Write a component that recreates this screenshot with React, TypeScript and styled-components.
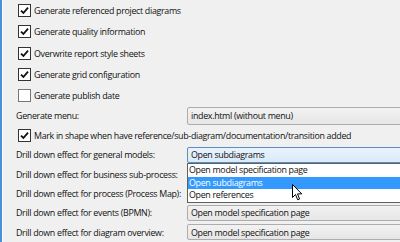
import React from 'react';
import styled, { createGlobalStyle } from 'styled-components';

const GlobalStyle = createGlobalStyle`
  html, body {
    margin: 0;
    padding: 0;
    background: #f0f0f0;
  }
  body {
    font-family: 'Open Sans', 'Noto Sans', sans-serif;
    font-size: 8.9px;
    letter-spacing: -0.32px;
    color: #111;
  }
`;

const checks = [
  { label: 'Generate referenced project diagrams', checked: true },
  { label: 'Generate quality information', checked: true },
  { label: 'Overwrite report style sheets', checked: true },
  { label: 'Generate grid configuration', checked: true },
  { label: 'Generate publish date', checked: false },
];

const drillRows = [
  { label: 'Drill down effect for general models:', value: 'Open subdiagrams', open: true },
  { label: 'Drill down effect for business sub-process:', value: '' },
  { label: 'Drill down effect for process (Process Map):', value: '' },
  { label: 'Drill down effect for events (BPMN):', value: 'Open model specification page' },
  { label: 'Drill down effect for diagram overview:', value: 'Open model specification page' },
];

const options = ['Open model specification page', 'Open subdiagrams', 'Open references'];

const Window = styled.div`
  width: 400px;
  height: 242px;
  overflow: hidden;
  display: flex;
  background: #f0f0f0;
  position: relative;
`;

const SideStrip = styled.div`
  width: 2px;
  flex: none;
  background: #4a8fda;
  border-right: 1px solid #fbfdff;
`;

const Content = styled.div`
  flex: none;
  width: 460px;
  padding-left: 13px;
  display: flex;
  flex-direction: column;
`;

const CheckRow = styled.label<{ $h: number }>`
  height: ${p => p.$h}px;
  display: flex;
  align-items: center;
  gap: 3px;
  padding-left: 2px;
  white-space: nowrap;
`;

const Box = styled.span<{ $checked: boolean }>`
  width: 11px;
  height: 11px;
  flex: none;
  border: 1px solid ${p => (p.$checked ? '#333' : '#777')};
  background: #fff;
  display: flex;
  align-items: center;
  justify-content: center;
`;

const FieldRow = styled.div<{ $h: number }>`
  height: ${p => p.$h}px;
  display: grid;
  grid-template-columns: 171px 240px;
  align-items: center;
  white-space: nowrap;
`;

const SelectWrap = styled.div`
  position: relative;
`;

const Select = styled.div<{ $h: number; $open?: boolean }>`
  height: ${p => p.$h - 2}px;
  border: 1px solid ${p => (p.$open ? '#5a8fc4' : '#adadad')};
  border-radius: 2px;
  background: ${p =>
    p.$open
      ? 'linear-gradient(#eaf3fc, #d9eafb)'
      : 'linear-gradient(#f2f2f2, #e6e6e6)'};
  display: flex;
  align-items: center;
  padding-left: 3px;
`;

const List = styled.div`
  position: absolute;
  top: 100%;
  left: 0;
  right: 0;
  z-index: 2;
  background: #fff;
  border: 1px solid #5f5f5f;
  display: flex;
  flex-direction: column;
`;

const Option = styled.div<{ $active: boolean }>`
  height: 12.6px;
  line-height: 12.6px;
  padding-left: 1px;
  background: ${p => (p.$active ? '#3399ff' : '#fff')};
  color: ${p => (p.$active ? '#fff' : '#111')};
`;

const Cursor = styled.svg`
  position: absolute;
  left: 292px;
  top: 184px;
  z-index: 3;
`;

const CheckMark = () => (
  <svg width="9" height="9" viewBox="0 0 9 9">
    <path d="M1 4.6 L3.4 7 L8 1.6" fill="none" stroke="#111" strokeWidth="1.8" />
  </svg>
);

const App: React.FC = () => {
  return (
    <Window>
      <GlobalStyle />
      <SideStrip />
      <Content>
        {checks.map(c => (
          <CheckRow key={c.label} $h={21.4}>
            <Box $checked={c.checked}>{c.checked && <CheckMark />}</Box>
            {c.label}
          </CheckRow>
        ))}
        <FieldRow $h={19.5}>
          <span>Generate menu:</span>
          <Select $h={18}>index.html (without menu)</Select>
        </FieldRow>
        <CheckRow $h={20}>
          <Box $checked>
            <CheckMark />
          </Box>
          Mark in shape when have reference/sub-diagram/documentation/transition added
        </CheckRow>
        {drillRows.map(r => (
          <FieldRow key={r.label} $h={19.5}>
            <span>{r.label}</span>
            <SelectWrap>
              <Select $h={16} $open={r.open}>{r.value}</Select>
              {r.open && (
                <List>
                  {options.map(o => (
                    <Option key={o} $active={o === r.value}>
                      {o}
                    </Option>
                  ))}
                </List>
              )}
            </SelectWrap>
          </FieldRow>
        ))}
      </Content>
      <Cursor width="11" height="17" viewBox="0 0 11 17">
        <path
          d="M0.5 0.5 L0.5 13.5 L3.5 10.5 L5.7 15.8 L7.6 15 L5.5 9.9 L9.8 9.9 Z"
          fill="#fff"
          stroke="#000"
          strokeWidth="1"
          strokeLinejoin="round"
        />
      </Cursor>
    </Window>
  );
};

export default App;
